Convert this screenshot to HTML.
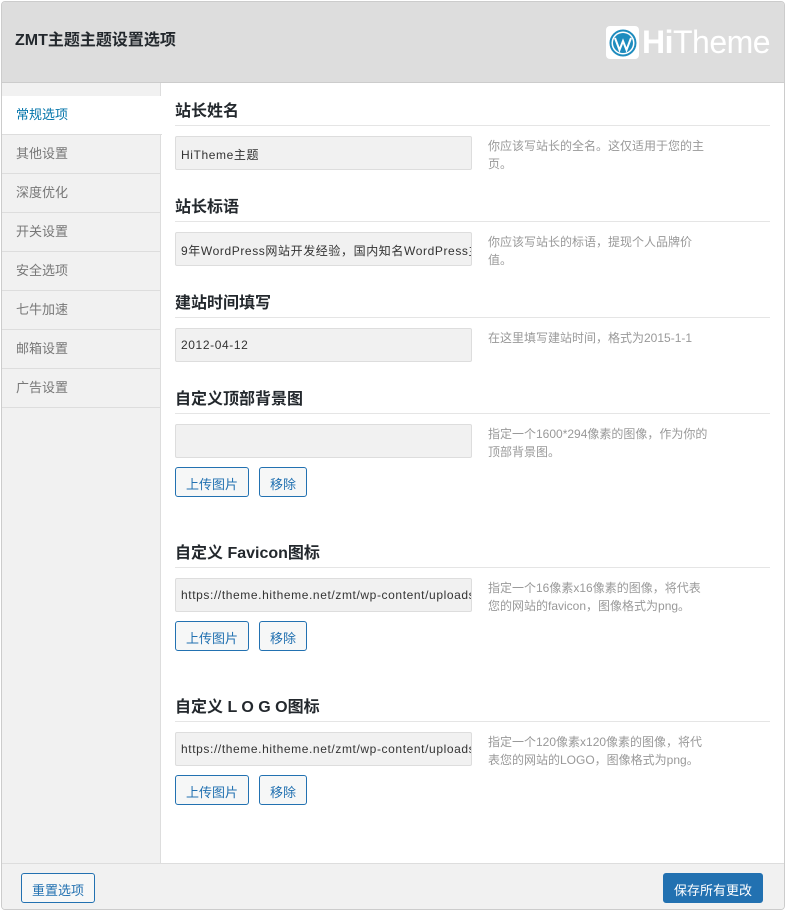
<!DOCTYPE html>
<html><head><meta charset="utf-8"><style>
*{box-sizing:border-box;margin:0;padding:0}
body{width:786px;height:912px;background:#fff;font-family:"Liberation Sans","Noto Sans CJK SC",sans-serif;position:relative;overflow:hidden}
.box{position:absolute;left:1px;top:1px;width:784px;height:909px;border:1px solid #ccc;border-radius:4px;overflow:hidden;background:#fff}
.hdr{position:absolute;left:0;top:0;width:782px;height:81px;background:#ddd;border-bottom:1px solid #ccc}
.hdr h1{position:absolute;left:13px;top:24px;font-size:16px;font-weight:bold;color:#23282d}
.logo{position:absolute;left:604px;top:23px;height:35px;display:flex;align-items:center}
.logo .ic{width:33px;height:33px;background:#fff;border-radius:4px;display:flex;align-items:center;justify-content:center}
.logo .t{color:#fff;font-size:32px;margin-left:3px;letter-spacing:-0.5px}
.side{position:absolute;left:0;top:81px;width:159px;height:781px;background:#f1f1f1;border-right:1px solid #ddd}
.mi{position:absolute;left:0;width:159px;height:39px;border-bottom:1px solid #ddd;font-size:13px;color:#777;padding:8px 0 0 14px}
.mi.a{background:#fff;color:#0073aa;width:160px;border-bottom:1px solid #ddd}
.h{position:absolute;left:173px;width:595px;font-size:16px;font-weight:bold;color:#23282d;border-bottom:1px solid #e5e5e5;height:30px;padding-top:1px}
.in{position:absolute;left:173px;width:297px;height:34px;background:#f1f1f1;border:1px solid #ddd;border-radius:2px;font-size:12px;color:#333;padding:9px 0 0 5px;white-space:nowrap;overflow:hidden;letter-spacing:0.6px}
.d{position:absolute;left:486px;width:223px;font-size:12px;color:#999;line-height:18px}
.b{position:absolute;height:30px;border:1px solid #2271b1;border-radius:3px;background:#f6f7f7;color:#2271b1;font-size:13px;text-align:center;padding-top:6px}
.ft{position:absolute;left:0;top:861px;width:782px;height:48px;background:#f1f1f1;border-top:1px solid #ddd}
</style></head><body>
<div class="box">
<div class="hdr"><h1>ZMT主题主题设置选项</h1>
<div class="logo"><div class="ic"><svg width="28" height="28" viewBox="0 0 28 28"><circle cx="14" cy="14" r="12.5" fill="none" stroke="#1e8cbe" stroke-width="2"/><circle cx="14" cy="14" r="10" fill="#1e8cbe"/><path d="M6 9l4.5 12 3.5-9 3.5 9L22 9" fill="none" stroke="#fff" stroke-width="2"/></svg></div><span class="t"><b>Hi</b>Theme</span></div></div>
<div class="side">
<div class="mi a" style="top:13px">常规选项</div>
<div class="mi" style="top:52px">其他设置</div>
<div class="mi" style="top:91px">深度优化</div>
<div class="mi" style="top:130px">开关设置</div>
<div class="mi" style="top:169px">安全选项</div>
<div class="mi" style="top:208px">七牛加速</div>
<div class="mi" style="top:247px">邮箱设置</div>
<div class="mi" style="top:286px">广告设置</div>
</div>
<div class="h" style="top:94px">站长姓名</div>
<div class="in" style="top:134px">HiTheme主题</div>
<div class="d" style="top:135px">你应该写站长的全名。这仅适用于您的主页。</div>
<div class="h" style="top:190px">站长标语</div>
<div class="in" style="top:230px">9年WordPress网站开发经验，国内知名WordPress主题</div>
<div class="d" style="top:231px">你应该写站长的标语，提现个人品牌价值。</div>
<div class="h" style="top:286px">建站时间填写</div>
<div class="in" style="top:326px">2012-04-12</div>
<div class="d" style="top:327px">在这里填写建站时间，格式为2015-1-1</div>
<div class="h" style="top:382px">自定义顶部背景图</div>
<div class="in" style="top:422px"></div>
<div class="d" style="top:423px">指定一个1600*294像素的图像，作为你的顶部背景图。</div>
<div class="b" style="left:173px;top:465px;width:74px">上传图片</div>
<div class="b" style="left:257px;top:465px;width:48px">移除</div>
<div class="h" style="top:536px">自定义 Favicon图标</div>
<div class="in" style="top:576px">https://theme.hitheme.net/zmt/wp-content/uploads</div>
<div class="d" style="top:577px">指定一个16像素x16像素的图像，将代表您的网站的favicon，图像格式为png。</div>
<div class="b" style="left:173px;top:619px;width:74px">上传图片</div>
<div class="b" style="left:257px;top:619px;width:48px">移除</div>
<div class="h" style="top:690px">自定义 L O G O图标</div>
<div class="in" style="top:730px">https://theme.hitheme.net/zmt/wp-content/uploads</div>
<div class="d" style="top:731px">指定一个120像素x120像素的图像，将代表您的网站的LOGO，图像格式为png。</div>
<div class="b" style="left:173px;top:773px;width:74px">上传图片</div>
<div class="b" style="left:257px;top:773px;width:48px">移除</div>
<div class="ft">
<div class="b" style="left:19px;top:9px;width:74px">重置选项</div>
<div class="b" style="left:661px;top:9px;width:100px;background:#2271b1;color:#fff">保存所有更改</div>
</div>
</div>
</body></html>
